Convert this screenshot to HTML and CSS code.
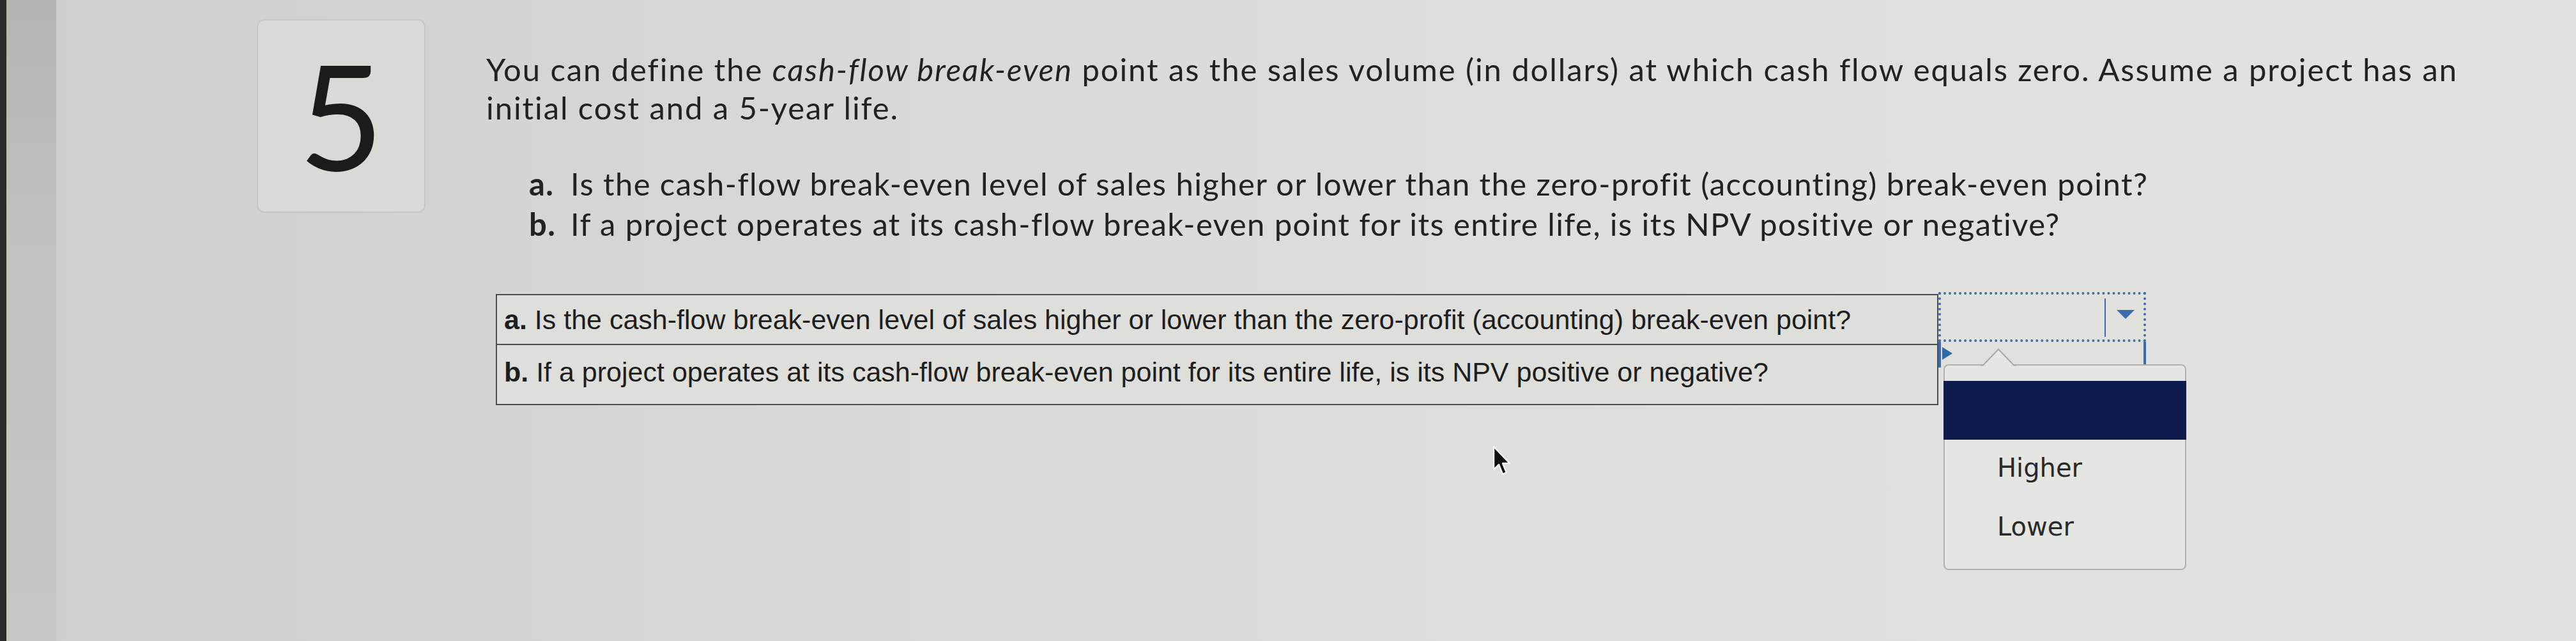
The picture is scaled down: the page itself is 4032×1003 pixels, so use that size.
FILE: index.html
```html
<!DOCTYPE html>
<html lang="en">
<head>
<meta charset="utf-8">
<title>Question 5</title>
<link rel="stylesheet" href="styles.css">
</head>
<body>
<div class="screen">
  <div class="edge"></div>
  <div class="bezel"></div>
  <main class="page">
    <section class="question">
      <div class="qnum">5</div>
      <div class="content">
        <p class="prompt">You can define the <em>cash-flow break-even</em> point as the sales volume (in dollars) at which cash flow equals zero. Assume a project has an initial cost and a 5-year life.</p>
        <ol class="parts">
          <li><span class="lbl">a.</span><span>Is the cash-flow break-even level of sales higher or lower than the zero-profit (accounting) break-even point?</span></li>
          <li><span class="lbl">b.</span><span>If a project operates at its cash-flow break-even point for its entire life, is its NPV positive or negative?</span></li>
        </ol>
        <table class="answers">
          <tr class="row-a">
            <td class="qcell"><b>a.</b> Is the cash-flow break-even level of sales higher or lower than the zero-profit (accounting) break-even point?</td>
            <td class="scell">
              <div class="select focus">
                <span class="divider"></span>
                <svg class="arrow" width="28" height="14" viewBox="0 0 28 14"><polygon points="0,0 28,0 14,14" fill="#3a6db0"/></svg>
              </div>
            </td>
          </tr>
          <tr class="row-b">
            <td class="qcell"><b>b.</b> If a project operates at its cash-flow break-even point for its entire life, is its NPV positive or negative?</td>
            <td class="scell">
              <div class="select open">
                <svg class="marker" width="16" height="20" viewBox="0 0 16 20"><polygon points="0,0 16,10 0,20" fill="#2f6aa8"/></svg>
                <div class="popup">
                  <svg class="caret" width="56" height="28" viewBox="0 0 56 28"><polygon points="0,27 4,27 28,2 52,27 56,27 56,28 0,28" fill="#e5e5e1"/><polyline points="0,26.5 4,26.5 28,1.5 52,26.5 56,26.5" fill="none" stroke="#a9a9a6" stroke-width="2"/></svg>
                  <div class="opt blank"></div>
                  <div class="opt">Higher</div>
                  <div class="opt">Lower</div>
                </div>
              </div>
            </td>
          </tr>
        </table>
      </div>
    </section>
    <svg class="cursor" width="30" height="48" viewBox="0 0 30 48"><path d="M2 2 L2 38 L10 30 L16 45 L22 42.5 L16 28 L27 28 Z" fill="#111" stroke="#f2f2f2" stroke-width="2.5" stroke-linejoin="round"/></svg>
  </main>
</div>
</body>
</html>
```

FILE: styles.css
```css
html, body {
  margin: 0;
  padding: 0;
  height: 100%;
}
body {
  background: #d6d6d2;
  overflow: hidden;
}
.screen {
  display: flex;
  height: 1003px;
}
.edge {
  width: 10px;
  background: #2b2b2b;
  flex: none;
}
.bezel {
  width: 78px;
  flex: none;
  background: linear-gradient(180deg, #b4b4b0 0%, #c2c2be 40%, #c6c6c2 100%);
}
.page {
  flex: 1;
  position: relative;
  padding: 30px 0 0 314px;
  background: linear-gradient(90deg, #cfcfcb 0%, #d8d8d4 30%, #dfdfdb 65%, #e2e2de 100%);
  color: #222222;
}
.question {
  display: flex;
  align-items: flex-start;
}
.qnum {
  flex: none;
  box-sizing: border-box;
  width: 264px;
  height: 303px;
  border: 2px solid #c6c6c2;
  border-radius: 12px;
  background: #d9d9d5;
  display: flex;
  align-items: center;
  justify-content: center;
  padding-bottom: 8px;
  font-family: "Lato", "Liberation Sans", sans-serif;
  font-size: 230px;
  line-height: 1;
  color: #1b1b1b;
}
.content {
  margin-left: 95px;
}
.prompt {
  margin: 48px 0 0;
  width: 3160px;
  font-family: "Lato", "Liberation Sans", sans-serif;
  font-size: 49px;
  letter-spacing: 1.9px;
  line-height: 60px;
}
.prompt em {
  font-style: italic;
}
.parts {
  list-style: none;
  margin: 58px 0 0;
  padding: 0 0 0 67px;
  font-family: "Lato", "Liberation Sans", sans-serif;
  font-size: 49px;
  letter-spacing: 1.4px;
  line-height: 63px;
}
.parts li {
  display: flex;
}
.parts .lbl {
  width: 65px;
  flex: none;
  font-weight: 700;
}
.answers {
  margin: 78px 0 0 15px;
  border-collapse: collapse;
  font-family: "Liberation Sans", Arial, sans-serif;
  font-size: 43px;
  line-height: 48px;
  color: #1e1e1e;
}
.answers td {
  padding: 0;
  vertical-align: top;
}
.qcell {
  box-sizing: border-box;
  width: 2256px;
  border: 2px solid #4e4e4e;
  padding: 14px 11px 0 !important;
  background: #dededa;
}
.row-a .qcell {
  height: 78px;
}
.row-b .qcell {
  height: 94px;
  padding-top: 18px !important;
}
.scell {
  width: 325px;
}
.select {
  position: relative;
  box-sizing: border-box;
  width: 325px;
}
.select.focus {
  height: 78px;
  margin-top: -4px;
  border: 4px dotted #3a6cb0;
}
.select.focus .divider {
  position: absolute;
  left: 256px;
  top: 6px;
  bottom: 4px;
  width: 2px;
  background: #3a6cb0;
}
.select.focus .arrow {
  position: absolute;
  left: 275px;
  top: 24px;
}
.select.open {
  height: 40px;
  margin-top: -4px;
  border-left: 4px solid #3a6cb0;
  border-right: 4px solid #3a6cb0;
}
.marker {
  position: absolute;
  left: 2px;
  top: 8px;
}
.popup {
  position: absolute;
  left: 4px;
  top: 35px;
  z-index: 2;
  box-sizing: border-box;
  width: 380px;
  height: 322px;
  padding-top: 24px;
  background: #e5e5e1;
  border: 2px solid #b0b0ad;
  border-radius: 8px;
  font-family: "DejaVu Sans", "Liberation Sans", sans-serif;
  font-size: 40px;
  color: #2a2a2a;
}
.caret {
  position: absolute;
  left: 56px;
  top: -27px;
}
.opt {
  height: 92px;
  line-height: 88px;
  padding-left: 82px;
}
.opt.blank {
  background: #0d1a4c;
  margin: 0 -2px;
}
.cursor {
  position: absolute;
  left: 2248px;
  top: 697px;
}
```
